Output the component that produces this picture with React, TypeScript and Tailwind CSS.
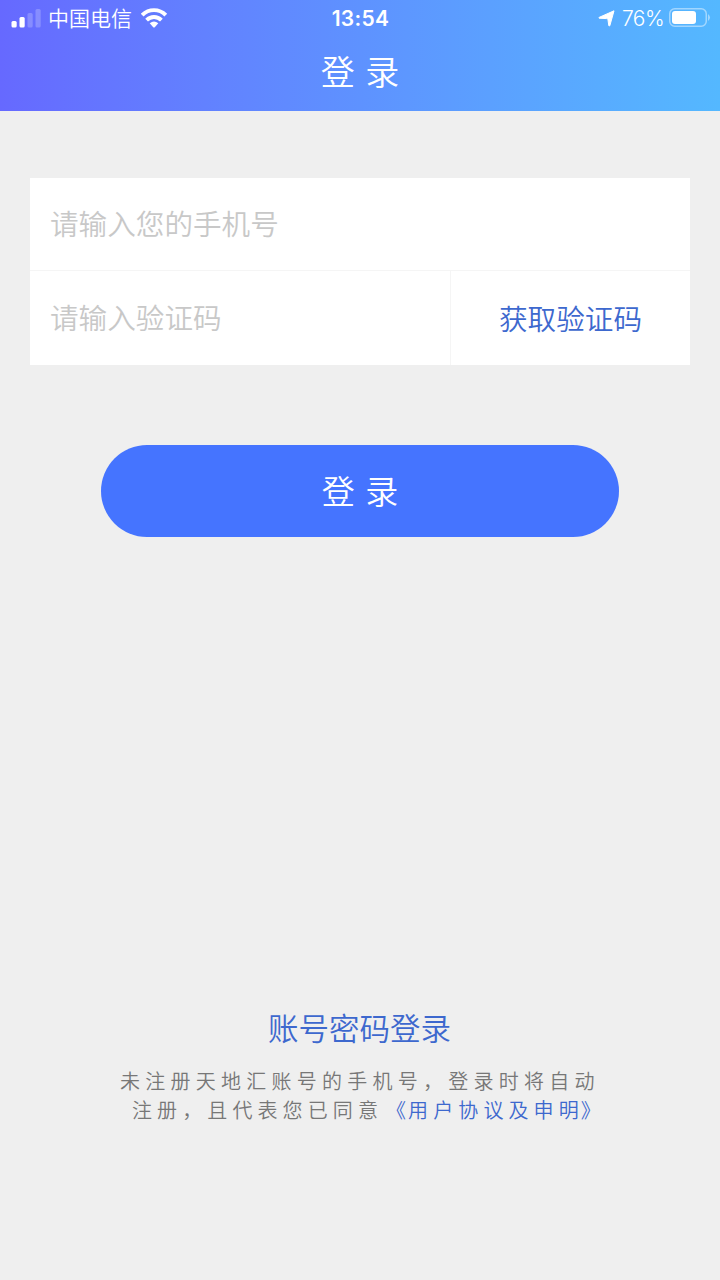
export default function App() {
  return (
    <div className="flex h-[1280px] w-[720px] flex-col overflow-hidden bg-[#efefef] font-['Inter','Noto_Sans_CJK_SC',sans-serif] font-[350]">
      <header className="h-[111px] bg-linear-to-r from-[#6669ff] via-[#5e92ff] to-[#54b8ff] text-white">
        <div className="grid h-[36px] grid-cols-3 items-center pr-[9px] pl-[11px] text-[21px]">
          <div className="flex items-center">
            <svg width="31" height="19" viewBox="0 0 31 19" fill="white">
              <rect x="0.5" y="12" width="5.2" height="6.5" rx="1.5" />
              <rect x="8.5" y="8" width="5.2" height="10.5" rx="1.5" />
              <rect x="16.5" y="4" width="5.2" height="14.5" rx="1.5" opacity=".22" />
              <rect x="24.5" y="0" width="5.2" height="18.5" rx="1.5" opacity=".22" />
            </svg>
            <span className="ml-[6px] pt-[2px] leading-[34px]">中国电信</span>
            <svg className="ml-[9px]" width="28" height="20" viewBox="0 0 28 20" fill="none" stroke="white" strokeWidth="3.9">
              <path d="M1.2 7.1C7.8 .5 18.2 .5 24.8 7.1" />
              <path d="M5.6 12.1C9.8 8 16.2 8 20.4 12.1" />
              <path d="M8.7 15.2Q13 11.6 17.3 15.2L13.8 19.2Q13 20 12.2 19.2Z" fill="white" stroke="none" />
            </svg>
          </div>
          <span className="pt-[1px] pr-px text-center font-semibold tracking-[0.3px]">13:54</span>
          <div className="flex items-center justify-end">
            <svg width="17" height="17" viewBox="0 0 17 17" fill="white" stroke="white" strokeLinejoin="round"><path d="M16 .8L11.8 15.8Q11.2 16.4 10.8 15.6L9.9 9.2Q9.6 8.6 8.5 8.6L1.1 8.2Q.6 7.8 1.1 7.4Z" /></svg>
            <span className="mr-[5px] ml-[7px] pt-[2px] tracking-[-0.6px]">76%</span>
            <svg width="42" height="20" viewBox="0 0 42 20" fill="none">
              <rect x=".75" y=".75" width="36.5" height="17.5" rx="5" stroke="white" opacity=".45" strokeWidth="1.5" />
              <rect x="3" y="3" width="24" height="13" rx="3" fill="white" />
              <path d="M39 6Q43 9.5 39 13Z" fill="white" opacity=".45" />
            </svg>
          </div>
        </div>
        <h1 className="pt-[2px] text-center text-[34px] leading-[70px] font-[350] [word-spacing:1px]">登 录</h1>
      </header>
      <main className="flex grow flex-col px-[30px] pt-[67px]">
        <div className="h-[187px] bg-white text-[28.6px]">
          <div className="flex h-[93px] items-center border-b border-[#f5f5f5] px-[20px] pt-[3px] text-[#c8c8c8]">请输入您的手机号</div>
          <div className="flex h-[94px] items-center">
            <div className="flex h-full w-[421px] items-center border-r border-[#f5f5f5] px-[20px] pt-[3px] text-[#c8c8c8]">请输入验证码</div>
            <button className="h-full grow pt-[4px] text-[#3d68ce]">获取验证码</button>
          </div>
        </div>
        <button className="mx-auto mt-[80px] h-[92px] w-[518px] rounded-full bg-[#4574ff] pt-[4px] text-[33px] text-white [word-spacing:1px]">登 录</button>
        <div className="mt-[468px] pr-px text-center text-[30.5px] leading-[48px] text-[#3d68ce]">账号密码登录</div>
        <div className="mt-[15px] pl-[90px] text-[20px] leading-[29px] text-[#777777]">
          <p className="tracking-[5.25px]">未注册天地汇账号的手机号，登录时将自动</p>
          <p className="pl-[12px] tracking-[5.1px]">
            注册，且代表您已同意
            <span className="text-[#3d68ce]"><span className="ml-[3px] tracking-[2.1px]">《</span>用户协议及申<span className="tracking-[2px]">明》</span></span>
          </p>
        </div>
      </main>
    </div>
  );
}
